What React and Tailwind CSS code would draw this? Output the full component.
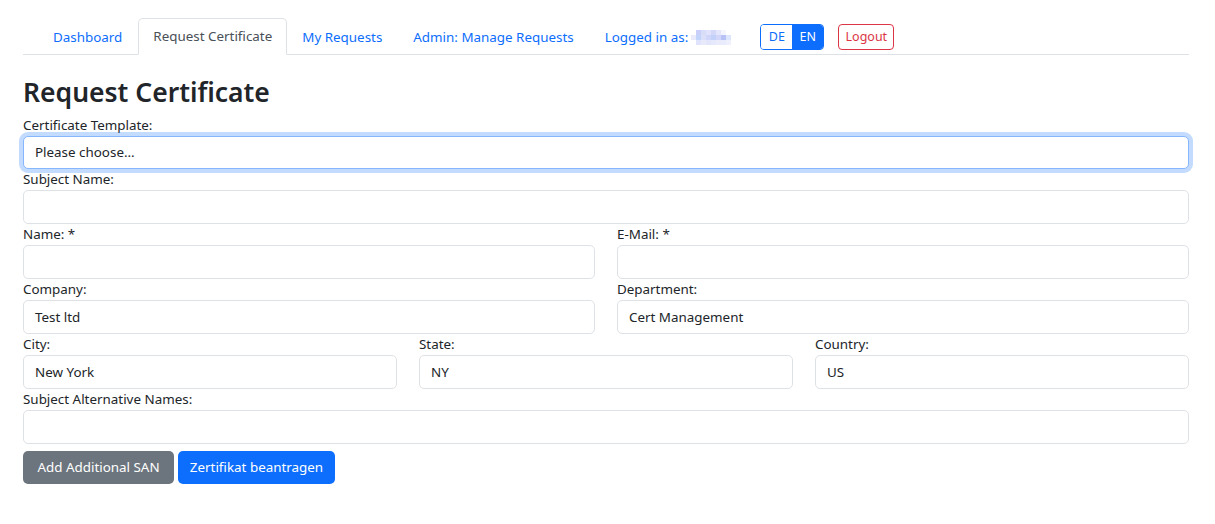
import React from "react";

const font = { fontFamily: '"Segoe UI", "Noto Sans", "Liberation Sans", sans-serif' };

const mosaic = [
  ["#ffffff", "#c9cff8", "#d7dcf9", "#e0e3fb", "#d3d8f9", "#e4e6fb", "#f4f5fd", "#ffffff"],
  ["#e9ebfc", "#c3d4fb", "#dcdffa", "#cfd6f9", "#c2d1fa", "#d2d7f9", "#b9c2f6", "#dde6fc"],
  ["#ffffff", "#dfe3fb", "#e8eafb", "#e3e6fb", "#e6e9fb", "#eaecfc", "#e9ecfc", "#eef1fd"],
];

function Field({ label, value, className = "" }) {
  return (
    <div className={"flex flex-col " + className}>
      <label className="text-[13.4px] leading-[21px] text-[#212529]">{label}</label>
      <div className="h-[34px] border border-[#dee2e6] rounded-[5px] bg-white px-[11px] flex items-center text-[13.4px] text-[#212529]">
        {value}
      </div>
    </div>
  );
}

export default function App() {
  return (
    <div className="bg-white min-h-[524px] w-[1215px] text-[#212529]" style={font}>
      <div className="ml-[23px] w-[1166px] pt-[18px]">
        {/* Nav */}
        <div className="flex items-end border-b border-[#dee2e6] h-[37px] pl-[14px]">
          <div className="px-[16px] h-[36px] flex items-center text-[13.4px] text-[#0d6efd] -mb-px">Dashboard</div>
          <div className="px-[14px] h-[37px] flex items-center text-[13.4px] text-[#495057] bg-white border border-[#dee2e6] border-b-white rounded-t-[5px] -mb-px">
            Request Certificate
          </div>
          <div className="px-[15px] h-[36px] flex items-center text-[13.4px] text-[#0d6efd] -mb-px">My Requests</div>
          <div className="px-[16px] h-[36px] flex items-center text-[13.4px] text-[#0d6efd] -mb-px">Admin: Manage Requests</div>
          <div className="px-[15px] h-[36px] flex items-center text-[13.4px] text-[#0d6efd] -mb-px">
            Logged in as:
            <span className="ml-[3px] flex flex-col">
              {mosaic.map((row, i) => (
                <span key={i} className="flex">
                  {row.map((c, j) => (
                    <span key={j} className="w-[5px] h-[5px]" style={{ background: c }} />
                  ))}
                </span>
              ))}
            </span>
          </div>
          <div className="h-[36px] flex items-center ml-[14px] -mb-px">
            <div className="flex h-[26px] rounded-[4px] border border-[#0d6efd] overflow-hidden text-[12.5px]">
              <span className="w-[31px] flex items-center justify-center text-[#0d6efd] bg-white">DE</span>
              <span className="w-[31px] flex items-center justify-center text-white bg-[#0d6efd]">EN</span>
            </div>
            <div className="ml-[14px] h-[26px] w-[56px] flex items-center justify-center rounded-[4px] border border-[#dc3545] text-[#dc3545] text-[12.5px]">
              Logout
            </div>
          </div>
        </div>

        {/* Heading */}
        <h1 className="text-[26.5px] font-semibold leading-[34px] mt-[20px] mb-[6px] text-[#212529]">Request Certificate</h1>

        {/* Form */}
        <div className="flex flex-col">
          <div className="flex flex-col">
            <label className="text-[13.4px] leading-[21px]">Certificate Template:</label>
            <div className="h-[33px] border border-[#86b7fe] rounded-[5px] bg-white px-[11px] flex items-center text-[13.4px] shadow-[0_0_0_4px_rgba(13,110,253,0.25)]">
              Please choose...
            </div>
          </div>
          <Field label="Subject Name:" value="" />
          <div className="grid grid-cols-2 gap-x-[22px]">
            <Field label="Name: *" value="" />
            <Field label="E-Mail: *" value="" />
            <Field label="Company:" value="Test ltd" />
            <Field label="Department:" value="Cert Management" />
          </div>
          <div className="grid grid-cols-3 gap-x-[22px]">
            <Field label="City:" value="New York" />
            <Field label="State:" value="NY" />
            <Field label="Country:" value="US" />
          </div>
          <Field label="Subject Alternative Names:" value="" />
          <div className="flex gap-[4px] mt-[7px]">
            <button className="h-[33px] w-[151px] rounded-[5px] bg-[#6c757d] text-white text-[13.4px]">Add Additional SAN</button>
            <button className="h-[33px] w-[157px] rounded-[5px] bg-[#0d6efd] text-white text-[13.4px]">Zertifikat beantragen</button>
          </div>
        </div>
      </div>
    </div>
  );
}
